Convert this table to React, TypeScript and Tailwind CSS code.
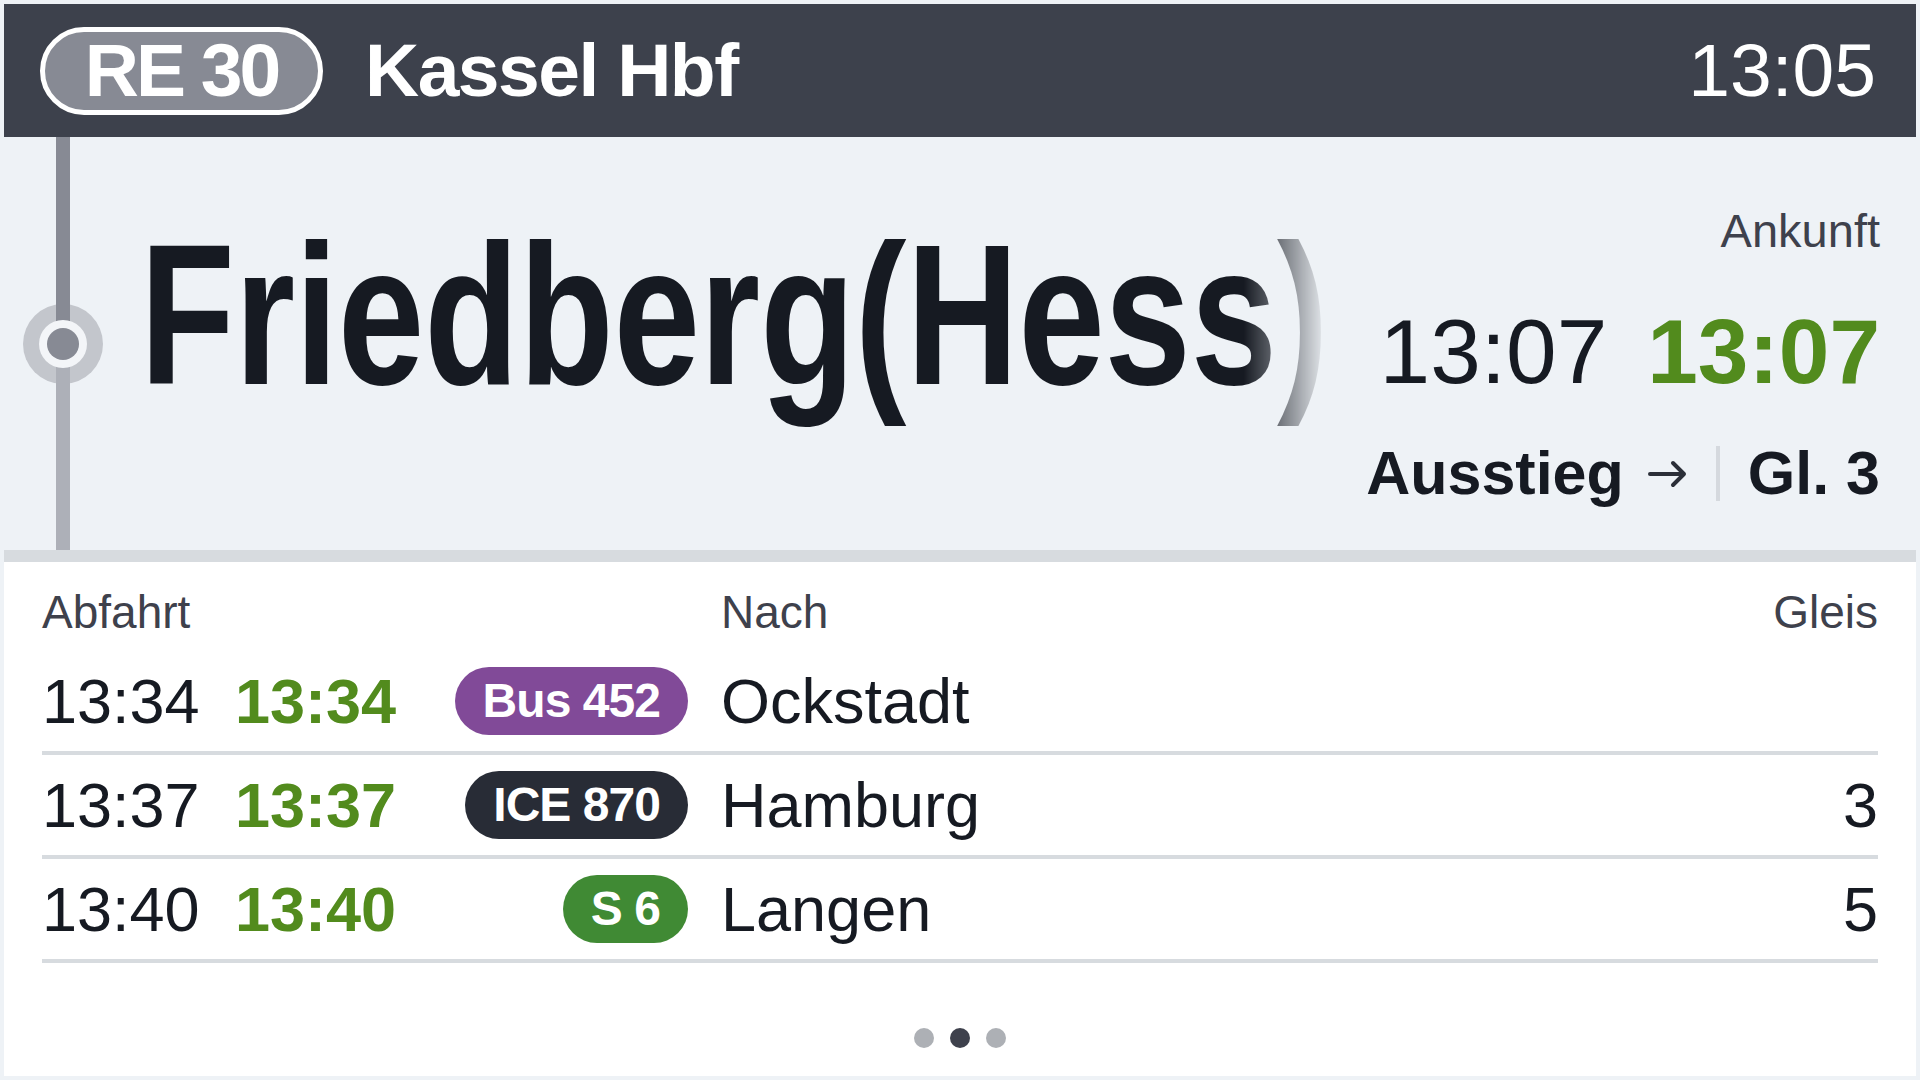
import React from 'react';

interface Departure {
  plan: string;
  real: string;
  line: string;
  lineClass: string;
  dest: string;
  track: string;
}

const departures: Departure[] = [
  { plan: '13:34', real: '13:34', line: 'Bus 452', lineClass: 'bg-[#814a98]', dest: 'Ockstadt', track: '' },
  { plan: '13:37', real: '13:37', line: 'ICE 870', lineClass: 'bg-[#282c36]', dest: 'Hamburg', track: '3' },
  { plan: '13:40', real: '13:40', line: 'S 6', lineClass: 'bg-[#408a34]', dest: 'Langen', track: '5' },
];

function ArrowRight() {
  return (
    <svg width="40" height="28" viewBox="0 0 40 28" fill="none" className="ml-[24px]">
      <path d="M2 14H36M25 3L36 14L25 25" stroke="#2b2f38" strokeWidth="4" strokeLinecap="round" strokeLinejoin="round" />
    </svg>
  );
}

export default function App() {
  return (
    <div className="w-[1920px] h-[1080px] bg-[#eef2f6] p-1 flex flex-col overflow-hidden font-['Liberation_Sans',Arial,sans-serif] text-[#161a22]">
      {/* Header */}
      <header className="h-[133px] shrink-0 bg-[#3d414c] flex items-center pl-[36px] pr-[40px]">
        <div className="w-[283px] h-[88px] rounded-full border-[5px] border-white bg-[#878a94] flex items-center justify-center">
          <span className="text-[75px] leading-none font-bold text-white tracking-[-0.04em]">RE 30</span>
        </div>
        <span className="ml-[42px] text-[75px] leading-none font-bold text-white tracking-[-0.02em]">Kassel Hbf</span>
        <span className="ml-auto text-[75px] leading-none text-white">13:05</span>
      </header>

      {/* Current stop */}
      <section className="h-[413px] shrink-0 flex">
        <div className="relative w-[136px] shrink-0 flex flex-col pl-[52px]">
          <div className="absolute left-[19px] top-[167px] w-[80px] h-[80px] rounded-full bg-[#c3c6cc]" />
          <div className="relative z-10 w-[14px] h-[207px] bg-[#878a94]" />
          <div className="relative z-10 w-[14px] flex-1 bg-[#adb0b8]" />
          <div className="absolute z-20 left-[35px] top-[183px] w-[48px] h-[48px] rounded-full bg-[#f3f5f8] flex items-center justify-center">
            <div className="w-[32px] h-[32px] rounded-full bg-[#878a94]" />
          </div>
        </div>

        <div className="w-[1188px] shrink-0 overflow-hidden pt-[78px] [mask-image:linear-gradient(to_right,#000_1104px,transparent_1188px)]">
          <span className="inline-block origin-left scale-x-[0.775] text-[200px] leading-none font-bold whitespace-nowrap">
            Friedberg(Hess)
          </span>
        </div>

        <div className="ml-auto pr-[36px] pt-[70px] flex flex-col items-end">
          <span className="text-[47px] leading-none text-[#3e414c]">Ankunft</span>
          <div className="mt-[52px] flex gap-[40px] text-[91px] leading-none">
            <span>13:07</span>
            <span className="font-bold text-[#528b1d]">13:07</span>
          </div>
          <div className="mt-[46px] flex items-center text-[61px] leading-none font-bold">
            <span>Ausstieg</span>
            <ArrowRight />
            <span className="mx-[28px] w-[4px] h-[55px] bg-[#d5d9de]" />
            <span>Gl. 3</span>
          </div>
        </div>
      </section>

      <div className="h-[12px] shrink-0 bg-[#d7dbdf]" />

      {/* Departures */}
      <section className="flex-1 bg-white flex flex-col px-[38px]">
        <div className="pt-[27px] flex text-[46px] leading-none text-[#3e414c]">
          <span className="w-[679px]">Abfahrt</span>
          <span className="flex-1">Nach</span>
          <span>Gleis</span>
        </div>

        <div className="mt-[16px] flex flex-col">
          {departures.map((d) => (
            <div key={d.line} className="h-[104px] border-b-4 border-[#d7dbdf] flex items-center text-[63px] leading-none">
              <span className="w-[193px]">{d.plan}</span>
              <span className="w-[161px] font-bold text-[#528b1d]">{d.real}</span>
              <div className="w-[292px] flex justify-end">
                <span className={`h-[68px] px-[28px] rounded-full flex items-center text-[48px] font-bold text-white tracking-[-0.02em] ${d.lineClass}`}>
                  {d.line}
                </span>
              </div>
              <span className="ml-[33px] flex-1">{d.dest}</span>
              <span>{d.track}</span>
            </div>
          ))}
        </div>

        <div className="mt-auto mb-[28px] flex justify-center gap-4">
          <span className="w-5 h-5 rounded-full bg-[#adb0b5]" />
          <span className="w-5 h-5 rounded-full bg-[#3e414c]" />
          <span className="w-5 h-5 rounded-full bg-[#adb0b5]" />
        </div>
      </section>
    </div>
  );
}
